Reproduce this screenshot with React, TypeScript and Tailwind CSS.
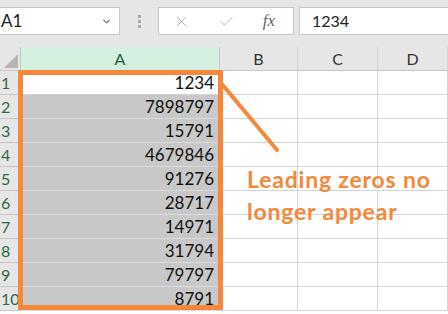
import { X, Check, ChevronDown } from 'lucide-react';

const values = ['1234', '7898797', '15791', '4679846', '91276', '28717', '14971', '31794', '79797', '8791'];
const cols = [
  { name: 'B', w: 'w-[78px]' },
  { name: 'C', w: 'w-[80px]' },
  { name: 'D', w: 'flex-1' },
];

export default function App() {
  return (
    <div className="relative w-[448px] h-[314px] overflow-hidden bg-white" style={{ fontFamily: 'Lato, "Open Sans", sans-serif' }}>
      {/* formula bar */}
      <div className="h-[47px] bg-[#e6e6e6] flex items-start pt-[7px]">
        <div className="w-[120px] h-[28px] bg-white border border-[#c6c6c6] border-l-0 flex items-center justify-between pl-[1px] pr-[7px]">
          <span className="text-[17px] text-[#222]">A1</span>
          <ChevronDown size={11} strokeWidth={3} className="text-[#777]" />
        </div>
        <div className="w-[38px] h-[28px] flex flex-col items-center justify-center gap-[2px]">
          <span className="w-[3px] h-[3px] bg-[#aaa]" />
          <span className="w-[3px] h-[3px] bg-[#aaa]" />
          <span className="w-[3px] h-[3px] bg-[#aaa]" />
        </div>
        <div className="w-[136px] h-[28px] bg-white border border-[#c6c6c6] flex items-center">
          <div className="w-[45px] flex justify-center">
            <X size={17} strokeWidth={1.3} className="text-[#aaa]" />
          </div>
          <div className="w-[45px] flex justify-center">
            <Check size={17} strokeWidth={1.3} className="text-[#aaa]" />
          </div>
          <div className="w-[40px] flex justify-center">
            <span className="italic text-[17px] text-[#666]" style={{ fontFamily: '"Liberation Serif", serif' }}>fx</span>
          </div>
        </div>
        <div className="ml-[5px] flex-1 h-[28px] bg-white border border-[#c6c6c6] border-r-0 flex items-center pl-[12px]">
          <span className="text-[16px] text-[#222]">1234</span>
        </div>
      </div>

      {/* column headers */}
      <div className="flex h-[24px] bg-[#e6e6e6] border-b border-[#c6c6c6]">
        <div className="w-[21px] border-r border-[#c6c6c6] relative overflow-hidden">
          <div className="absolute right-[2px] bottom-[2px] w-0 h-0 border-l-[14px] border-l-transparent border-b-[14px] border-b-[#b4b4b4]" />
        </div>
        <div className="w-[199px] bg-[#d3f0e0] border-r border-[#c6c6c6] flex items-center justify-center text-[16px] text-[#1f5f3a]">A</div>
        {cols.map((c) => (
          <div key={c.name} className={`${c.w} border-r border-[#d4d4d4] flex items-center justify-center text-[16px] text-[#333]`}>
            {c.name}
          </div>
        ))}
      </div>

      {/* rows */}
      {values.map((v, i) => (
        <div key={v} className="flex h-[24px]">
          <div className="w-[21px] bg-[#e6e6e6] border-r border-b border-[#c6c6c6] flex items-center pl-[1px] text-[16px] text-[#2a6a45]">
            {i + 1}
          </div>
          <div className={`w-[199px] border-b border-r border-[#d4d4d4] flex items-center justify-end pr-[5px] text-[17px] text-[#111] ${i === 0 ? 'bg-white' : 'bg-[#c8c8c8] border-b-[#dcdcdc]'}`}>
            {v}
          </div>
          {cols.map((c) => (
            <div key={c.name} className={`${c.w} border-b border-r border-[#d4d4d4]`} />
          ))}
        </div>
      ))}

      {/* annotation */}
      <div className="absolute left-[18px] top-[70px] w-[205px] h-[240px] border-[5px] border-[#f5883a]" />
      <svg className="absolute left-0 top-0" width="448" height="314">
        <line x1="221" y1="83" x2="277" y2="150" stroke="#f5883a" strokeWidth="4" strokeLinecap="round" />
      </svg>
      <div className="absolute left-[247px] top-[163px] text-[23px] leading-[32px] tracking-[0.8px] font-bold text-[#f5883a]">
        Leading zeros no
        <br />
        longer appear
      </div>
    </div>
  );
}
